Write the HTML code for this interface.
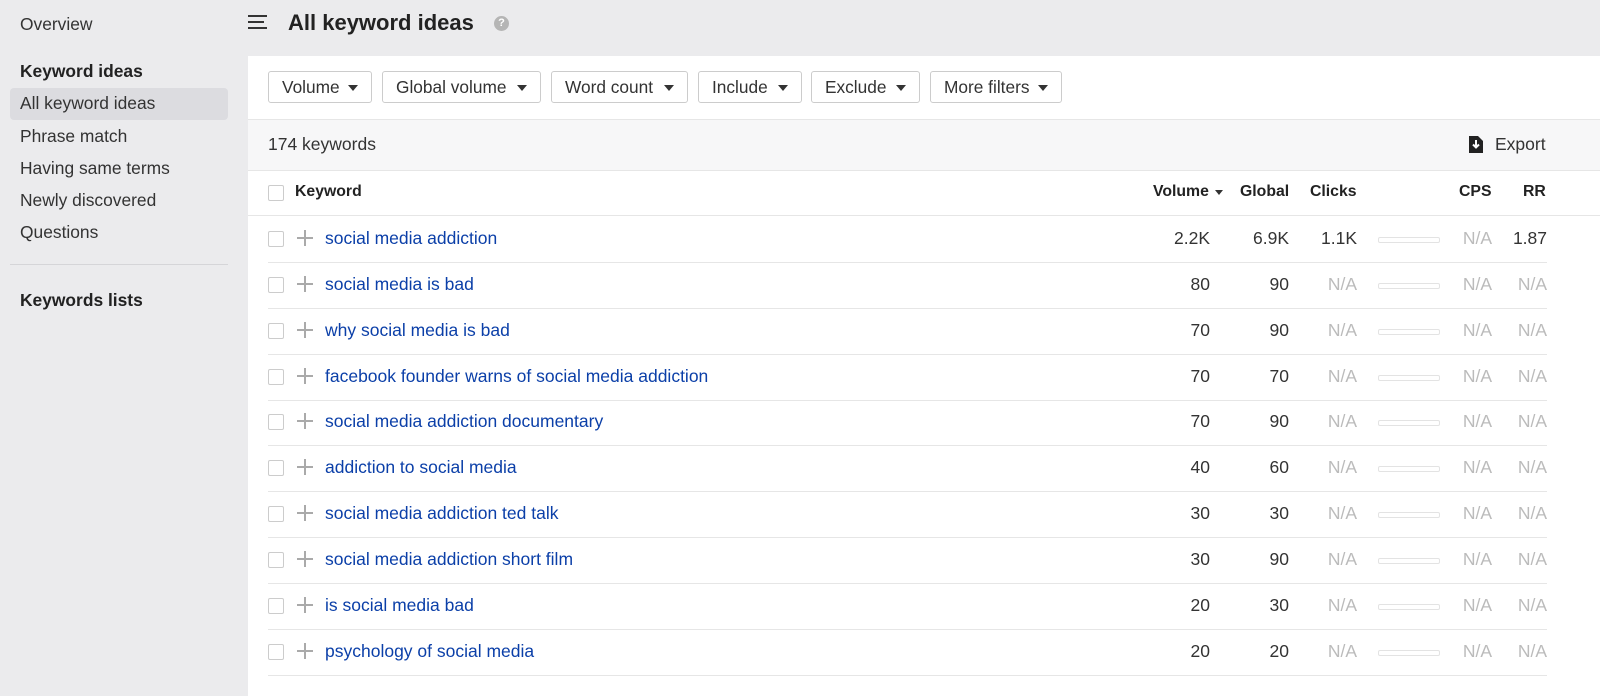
<!DOCTYPE html><html><head><style>
body{margin:0;width:1600px;height:687px;background:#ebebed;font-family:"Liberation Sans",Arial,sans-serif;position:relative;overflow:hidden;color:#333}
.a{position:absolute;white-space:nowrap}
.side{font-size:17.4px;color:#333}
.b{font-weight:bold;color:#222}
.panel{position:absolute;left:248px;top:56px;width:1352px;height:640px;background:#fff}
.btn{position:absolute;top:15px;height:32px;border:1px solid #ccc;border-radius:3px;font-size:17.3px;line-height:31px;padding:0 0 0 13px;box-sizing:border-box;color:#333}
.btn:after{content:"";position:absolute;right:13px;top:13px;border-left:5px solid transparent;border-right:5px solid transparent;border-top:6px solid #333}
.cb{position:absolute;width:16px;height:16px;border:1px solid #ccc;border-radius:2px;box-sizing:border-box;background:#fff}
.row{position:absolute;left:20px;width:1279px;height:46px;border-bottom:1px solid #e6e6e6;font-size:17.5px}
.row .k{position:absolute;left:57px;top:12px;color:#0b3fa8}
.row .n{position:absolute;top:12px;text-align:right}
.g{color:#bbb}
.plus{position:absolute;left:29px;top:14px;width:16px;height:16px}
.plus:before{content:"";position:absolute;left:7px;top:0;width:2px;height:16px;background:#aaa}
.plus:after{content:"";position:absolute;left:0;top:7px;width:16px;height:2px;background:#aaa}
.bar{position:absolute;left:1110px;top:21px;width:60px;height:4px;border:1px solid #e3e3e3;border-radius:2px}
.h{font-size:15.8px;font-weight:bold;color:#222;top:127px}
</style></head><body>
<div class="a side" style="left:20px;top:14px">Overview</div>
<div class="a side b" style="left:20px;top:61px">Keyword ideas</div>
<div class="a" style="left:10px;top:88px;width:218px;height:32px;background:#dcdce0;border-radius:4px"></div>
<div class="a side" style="left:20px;top:93px">All keyword ideas</div>
<div class="a side" style="left:20px;top:126px">Phrase match</div>
<div class="a side" style="left:20px;top:158px">Having same terms</div>
<div class="a side" style="left:20px;top:190px">Newly discovered</div>
<div class="a side" style="left:20px;top:222px">Questions</div>
<div class="a" style="left:10px;top:264px;width:218px;height:1px;background:#d5d5d8"></div>
<div class="a side b" style="left:20px;top:290px">Keywords lists</div>
<div class="a" style="left:248px;top:15px;width:19px;height:2px;background:#333;box-shadow:0 6px 0 #333,0 12px 0 #333"></div>
<div class="a" style="top:21px;height:2px;background:#ebebed;left:264px;width:4px"></div>
<div class="a" style="left:288px;top:10px;font-size:22px;font-weight:bold;color:#222">All keyword ideas</div>
<div class="a" style="left:494px;top:16px;width:15px;height:15px;border-radius:50%;background:#b5b5b5;color:#fff;font-size:11px;font-weight:bold;text-align:center;line-height:15px">?</div>
<div class="panel">
<div class="btn" style="left:20px;width:104px">Volume</div>
<div class="btn" style="left:134px;width:159px">Global volume</div>
<div class="btn" style="left:303px;width:137px">Word count</div>
<div class="btn" style="left:450px;width:104px">Include</div>
<div class="btn" style="left:563px;width:109px">Exclude</div>
<div class="btn" style="left:682px;width:132px">More filters</div>
<div class="a" style="left:0;top:63px;width:1352px;height:50px;background:#f7f7f8;border-top:1px solid #e6e6e6;border-bottom:1px solid #e6e6e6"></div>
<div class="a" style="left:20px;top:78px;font-size:17.5px">174 keywords</div>
<svg class="a" style="left:1221px;top:80px" width="14" height="17" viewBox="0 0 14 17"><path d="M0 0H9L14 5V17H0Z" fill="#222"/><path d="M7 4V11M4 8.5L7 11.5L10 8.5" stroke="#fff" stroke-width="2" fill="none"/></svg>
<div class="a" style="left:1247px;top:78px;font-size:17.5px">Export</div>
<div class="cb" style="left:20px;top:129px"></div>
<div class="a h" style="left:47px">Keyword</div>
<div class="a h" style="left:905px">Volume</div>
<div class="a" style="left:967px;top:134px;border-left:4px solid transparent;border-right:4px solid transparent;border-top:5px solid #333"></div>
<div class="a h" style="left:992px">Global</div>
<div class="a h" style="left:1062px">Clicks</div>
<div class="a h" style="left:1211px">CPS</div>
<div class="a h" style="left:1275px">RR</div>
<div class="a" style="left:0;top:159px;width:1352px;height:1px;background:#e6e6e6"></div>
<div id="rows"></div>
</div>
<script>
var d=[["social media addiction","2.2K","6.9K","1.1K","1.87"],["social media is bad","80","90"],["why social media is bad","70","90"],["facebook founder warns of social media addiction","70","70"],["social media addiction documentary","70","90"],["addiction to social media","40","60"],["social media addiction ted talk","30","30"],["social media addiction short film","30","90"],["is social media bad","20","30"],["psychology of social media","20","20"]];
var h="";d.forEach(function(r,i){var t=160+i*46-(i>3?1:0);
var c=r[3]?'<span>'+r[3]+'</span>':'<span class="g">N/A</span>';var rr=r[4]?'<span>'+r[4]+'</span>':'<span class="g">N/A</span>';
h+='<div class="row" style="top:'+t+'px"><div class="cb" style="left:0;top:15px"></div><div class="plus"></div><div class="k">'+r[0]+'</div>'+
'<div class="n" style="right:337px">'+r[1]+'</div><div class="n" style="right:258px">'+r[2]+'</div><div class="n" style="right:190px">'+c+'</div><div class="bar"></div><div class="n g" style="right:55px">N/A</div><div class="n" style="right:0">'+rr+'</div></div>';});
document.getElementById("rows").innerHTML=h;
</script>
</body></html>
